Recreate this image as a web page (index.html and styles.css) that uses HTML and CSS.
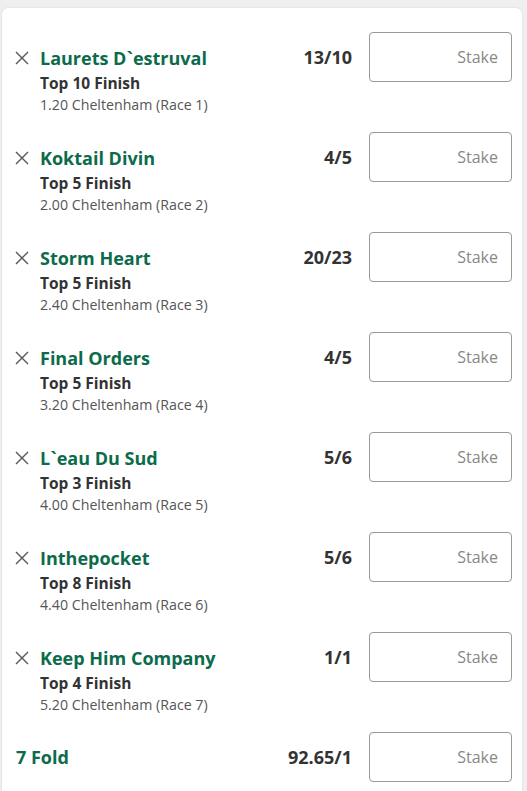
FILE: index.html
```html
<!DOCTYPE html>
<html>
<head>
<meta charset="utf-8">
<link rel="stylesheet" href="styles.css">
</head>
<body>
<div class="card">
  <div class="sel">
    <button class="remove" aria-label="Remove"><svg viewBox="0 0 14 14" width="14" height="14"><path d="M1 1L13 13M13 1L1 13"/></svg></button>
    <div class="info">
      <div class="name">Laurets D`estruval</div>
      <div class="market">Top 10 Finish</div>
      <div class="event">1.20 Cheltenham (Race 1)</div>
    </div>
    <div class="odds">13/10</div>
    <input class="stake" placeholder="Stake">
  </div>
  <div class="sel">
    <button class="remove" aria-label="Remove"><svg viewBox="0 0 14 14" width="14" height="14"><path d="M1 1L13 13M13 1L1 13"/></svg></button>
    <div class="info">
      <div class="name">Koktail Divin</div>
      <div class="market">Top 5 Finish</div>
      <div class="event">2.00 Cheltenham (Race 2)</div>
    </div>
    <div class="odds">4/5</div>
    <input class="stake" placeholder="Stake">
  </div>
  <div class="sel">
    <button class="remove" aria-label="Remove"><svg viewBox="0 0 14 14" width="14" height="14"><path d="M1 1L13 13M13 1L1 13"/></svg></button>
    <div class="info">
      <div class="name">Storm Heart</div>
      <div class="market">Top 5 Finish</div>
      <div class="event">2.40 Cheltenham (Race 3)</div>
    </div>
    <div class="odds">20/23</div>
    <input class="stake" placeholder="Stake">
  </div>
  <div class="sel">
    <button class="remove" aria-label="Remove"><svg viewBox="0 0 14 14" width="14" height="14"><path d="M1 1L13 13M13 1L1 13"/></svg></button>
    <div class="info">
      <div class="name">Final Orders</div>
      <div class="market">Top 5 Finish</div>
      <div class="event">3.20 Cheltenham (Race 4)</div>
    </div>
    <div class="odds">4/5</div>
    <input class="stake" placeholder="Stake">
  </div>
  <div class="sel">
    <button class="remove" aria-label="Remove"><svg viewBox="0 0 14 14" width="14" height="14"><path d="M1 1L13 13M13 1L1 13"/></svg></button>
    <div class="info">
      <div class="name">L`eau Du Sud</div>
      <div class="market">Top 3 Finish</div>
      <div class="event">4.00 Cheltenham (Race 5)</div>
    </div>
    <div class="odds">5/6</div>
    <input class="stake" placeholder="Stake">
  </div>
  <div class="sel">
    <button class="remove" aria-label="Remove"><svg viewBox="0 0 14 14" width="14" height="14"><path d="M1 1L13 13M13 1L1 13"/></svg></button>
    <div class="info">
      <div class="name">Inthepocket</div>
      <div class="market">Top 8 Finish</div>
      <div class="event">4.40 Cheltenham (Race 6)</div>
    </div>
    <div class="odds">5/6</div>
    <input class="stake" placeholder="Stake">
  </div>
  <div class="sel">
    <button class="remove" aria-label="Remove"><svg viewBox="0 0 14 14" width="14" height="14"><path d="M1 1L13 13M13 1L1 13"/></svg></button>
    <div class="info">
      <div class="name">Keep Him Company</div>
      <div class="market">Top 4 Finish</div>
      <div class="event">5.20 Cheltenham (Race 7)</div>
    </div>
    <div class="odds">1/1</div>
    <input class="stake" placeholder="Stake">
  </div>
  <div class="fold">
    <div class="fold-name">7 Fold</div>
    <div class="odds">92.65/1</div>
    <input class="stake" placeholder="Stake">
  </div>
</div>
</body>
</html>
```
FILE: styles.css
```css
html, body {
  margin: 0;
  padding: 0;
  background: #efefef;
  font-family: "Open Sans", "Noto Sans", sans-serif;
  overflow: hidden;
}
.card {
  margin: 8px 5px 0 2px;
  background: #fff;
  border-radius: 6px;
  box-shadow: 0 0 2px rgba(0,0,0,0.12);
  padding: 24px 10px 40px 13px;
  display: flex;
  flex-direction: column;
  gap: 18px;
}
.sel {
  display: flex;
  align-items: flex-start;
}
.remove {
  border: 0;
  background: none;
  padding: 0;
  margin: 19px 11px 0 0;
  width: 14px;
  height: 14px;
  display: block;
}
.remove svg {
  display: block;
  stroke: #555;
  stroke-width: 1.4;
  fill: none;
}
.info {
  flex: 1;
  padding-top: 14px;
  min-width: 0;
}
.name {
  color: #0b6b4b;
  font-weight: 700;
  font-size: 18px;
  line-height: 24px;
}
.market {
  color: #333;
  font-weight: 700;
  font-size: 15.5px;
  line-height: 26px;
}
.event {
  color: #555;
  font-size: 14.2px;
  line-height: 18px;
}
.odds {
  color: #333;
  font-weight: 700;
  font-size: 18px;
  line-height: 50px;
  margin-right: 17px;
}
.stake {
  width: 143px;
  height: 50px;
  box-sizing: border-box;
  border: 1px solid #999;
  border-radius: 4px;
  padding: 0 13px;
  text-align: right;
  font-family: inherit;
  font-size: 16px;
  color: #333;
  background: #fff;
  margin: 0;
}
.stake::placeholder {
  color: #888;
}
.fold {
  display: flex;
  align-items: center;
}
.fold-name {
  flex: 1;
  color: #0b6b4b;
  font-weight: 700;
  font-size: 18px;
  line-height: 24px;
  padding-left: 1px;
}
```
